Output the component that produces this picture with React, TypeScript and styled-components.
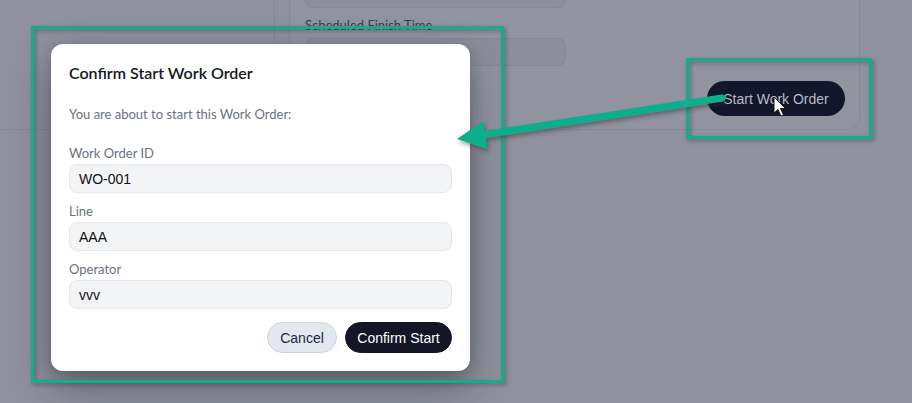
import React from "react";
import styled, { createGlobalStyle } from "styled-components";

const GlobalStyle = createGlobalStyle`
  html, body {
    margin: 0;
    padding: 0;
    width: 912px;
    height: 403px;
    overflow: hidden;
  }
  body {
    font-family: Lato, "Noto Sans", sans-serif;
    -webkit-font-smoothing: antialiased;
  }
  * { box-sizing: border-box; }
`;

const Page = styled.div`
  position: relative;
  width: 912px;
  height: 403px;
  background: #8f929c;
  overflow: hidden;
`;

const TopRow = styled.div`
  display: flex;
  align-items: stretch;
`;

const LeftPane = styled.div`
  width: 275px;
  flex: none;
  border-right: 1px solid #858893;
  border-bottom: 1px solid #878a94;
`;

const Main = styled.div`
  flex: 1;
  padding-left: 14px;
`;

const Card = styled.div`
  width: 571px;
  margin-top: -37px;
  padding: 16px 14px 13px 15px;
  background: #91949e;
  border: 1px solid #868993;
  border-radius: 12px;
  display: flex;
  flex-direction: column;
`;

const Field = styled.div`
  width: 261px;
  display: flex;
  flex-direction: column;
  gap: 4px;
  margin-bottom: 8px;
`;

const BgLabel = styled.span`
  font-size: 13px;
  line-height: 18px;
  color: #3b3f4b;
`;

const BgInput = styled.div`
  height: 28px;
  border-radius: 8px;
  background: #8c8f99;
  border: 1px solid #868993;
`;

const CardActions = styled.div`
  display: flex;
  justify-content: flex-end;
  margin-top: 7px;
`;

const PrimaryPill = styled.button`
  height: 35px;
  width: 138px;
  padding: 0;
  border: none;
  border-radius: 18px;
  background: #13152a;
  color: #b8bbc7;
  font-family: "Liberation Sans", Arial, sans-serif;
  font-size: 14px;
`;

const Modal = styled.div`
  position: absolute;
  left: 51px;
  top: 44px;
  width: 419px;
  background: #ffffff;
  border-radius: 12px;
  padding: 17px 18px 18px 18px;
  box-shadow: 0 18px 40px rgba(20, 22, 35, 0.35), 0 4px 14px rgba(20, 22, 35, 0.2);
  display: flex;
  flex-direction: column;
`;

const Title = styled.h2`
  margin: 0;
  font-size: 16px;
  line-height: 24px;
  font-weight: 600;
  color: #111827;
`;

const Subtitle = styled.p`
  margin: 19px 0 19px 0;
  font-size: 13px;
  line-height: 20px;
  color: #6b7280;
`;

const FieldList = styled.div`
  display: flex;
  flex-direction: column;
  gap: 8px;
`;

const FieldBlock = styled.div`
  display: flex;
  flex-direction: column;
  gap: 1px;
`;

const Label = styled.label`
  font-size: 13px;
  line-height: 20px;
  color: #6b7280;
`;

const ReadOnly = styled.div`
  height: 29px;
  display: flex;
  align-items: center;
  padding: 0 9px;
  background: #f3f4f6;
  border: 1px solid #e7e8ec;
  border-radius: 8px;
  font-family: "Liberation Sans", Arial, sans-serif;
  font-size: 14px;
  color: #111111;
`;

const Actions = styled.div`
  display: flex;
  justify-content: flex-end;
  gap: 8px;
  margin-top: 13px;
`;

const Button = styled.button<{ $primary?: boolean }>`
  height: 31px;
  width: ${(p) => (p.$primary ? "107px" : "70px")};
  padding: 0;
  border-radius: 16px;
  font-family: "Liberation Sans", Arial, sans-serif;
  font-size: 14px;
  border: 1px solid ${(p) => (p.$primary ? "#141526" : "#cdd5e0")};
  background: ${(p) => (p.$primary ? "#141526" : "#e2e8f0")};
  color: ${(p) => (p.$primary ? "#ffffff" : "#1f2937")};
`;

const Highlight = styled.div<{ $x: number; $y: number; $w: number; $h: number }>`
  position: absolute;
  left: ${(p) => p.$x}px;
  top: ${(p) => p.$y}px;
  width: ${(p) => p.$w}px;
  height: ${(p) => p.$h}px;
  border: 3px solid #0fae8c;
  filter: drop-shadow(2px 2px 2px rgba(40, 42, 50, 0.45));
  pointer-events: none;
`;

const Overlay = styled.svg`
  position: absolute;
  left: 0;
  top: 0;
  width: 912px;
  height: 403px;
  pointer-events: none;
`;

export default function App() {
  return (
    <>
      <GlobalStyle />
      <Page>
        <TopRow>
          <LeftPane />
          <Main>
            <Card>
              <Field>
                <BgInput />
              </Field>
              <Field>
                <BgLabel>Scheduled Finish Time</BgLabel>
                <BgInput />
              </Field>
              <CardActions>
                <PrimaryPill>Start Work Order</PrimaryPill>
              </CardActions>
            </Card>
          </Main>
        </TopRow>

        <Modal>
          <Title>Confirm Start Work Order</Title>
          <Subtitle>You are about to start this Work Order:</Subtitle>
          <FieldList>
            <FieldBlock>
              <Label>Work Order ID</Label>
              <ReadOnly>WO-001</ReadOnly>
            </FieldBlock>
            <FieldBlock>
              <Label>Line</Label>
              <ReadOnly>AAA</ReadOnly>
            </FieldBlock>
            <FieldBlock>
              <Label>Operator</Label>
              <ReadOnly>vvv</ReadOnly>
            </FieldBlock>
          </FieldList>
          <Actions>
            <Button>Cancel</Button>
            <Button $primary>Confirm Start</Button>
          </Actions>
        </Modal>

        <Highlight $x={31} $y={26} $w={473} $h={357} />
        <Highlight $x={686} $y={58} $w={186} $h={81} />

        <Overlay viewBox="0 0 912 403">
          <defs>
            <filter id="sh" x="-10%" y="-10%" width="130%" height="140%">
              <feDropShadow dx="2" dy="3" stdDeviation="2" floodColor="#2a2c34" floodOpacity="0.45" />
            </filter>
          </defs>
          <g filter="url(#sh)" fill="#0fae8c">
            <line x1="722" y1="98" x2="482" y2="135" stroke="#0fae8c" strokeWidth="7" strokeLinecap="round" />
            <polygon points="457,139 483,121 487,149" />
          </g>
          <path
            d="M774 97 L774 113 L778 109.5 L781 116 L783.5 115 L780.5 108.5 L785.5 108.5 Z"
            fill="#ffffff"
            stroke="#111111"
            strokeWidth="0.9"
            strokeLinejoin="round"
          />
        </Overlay>
      </Page>
    </>
  );
}
